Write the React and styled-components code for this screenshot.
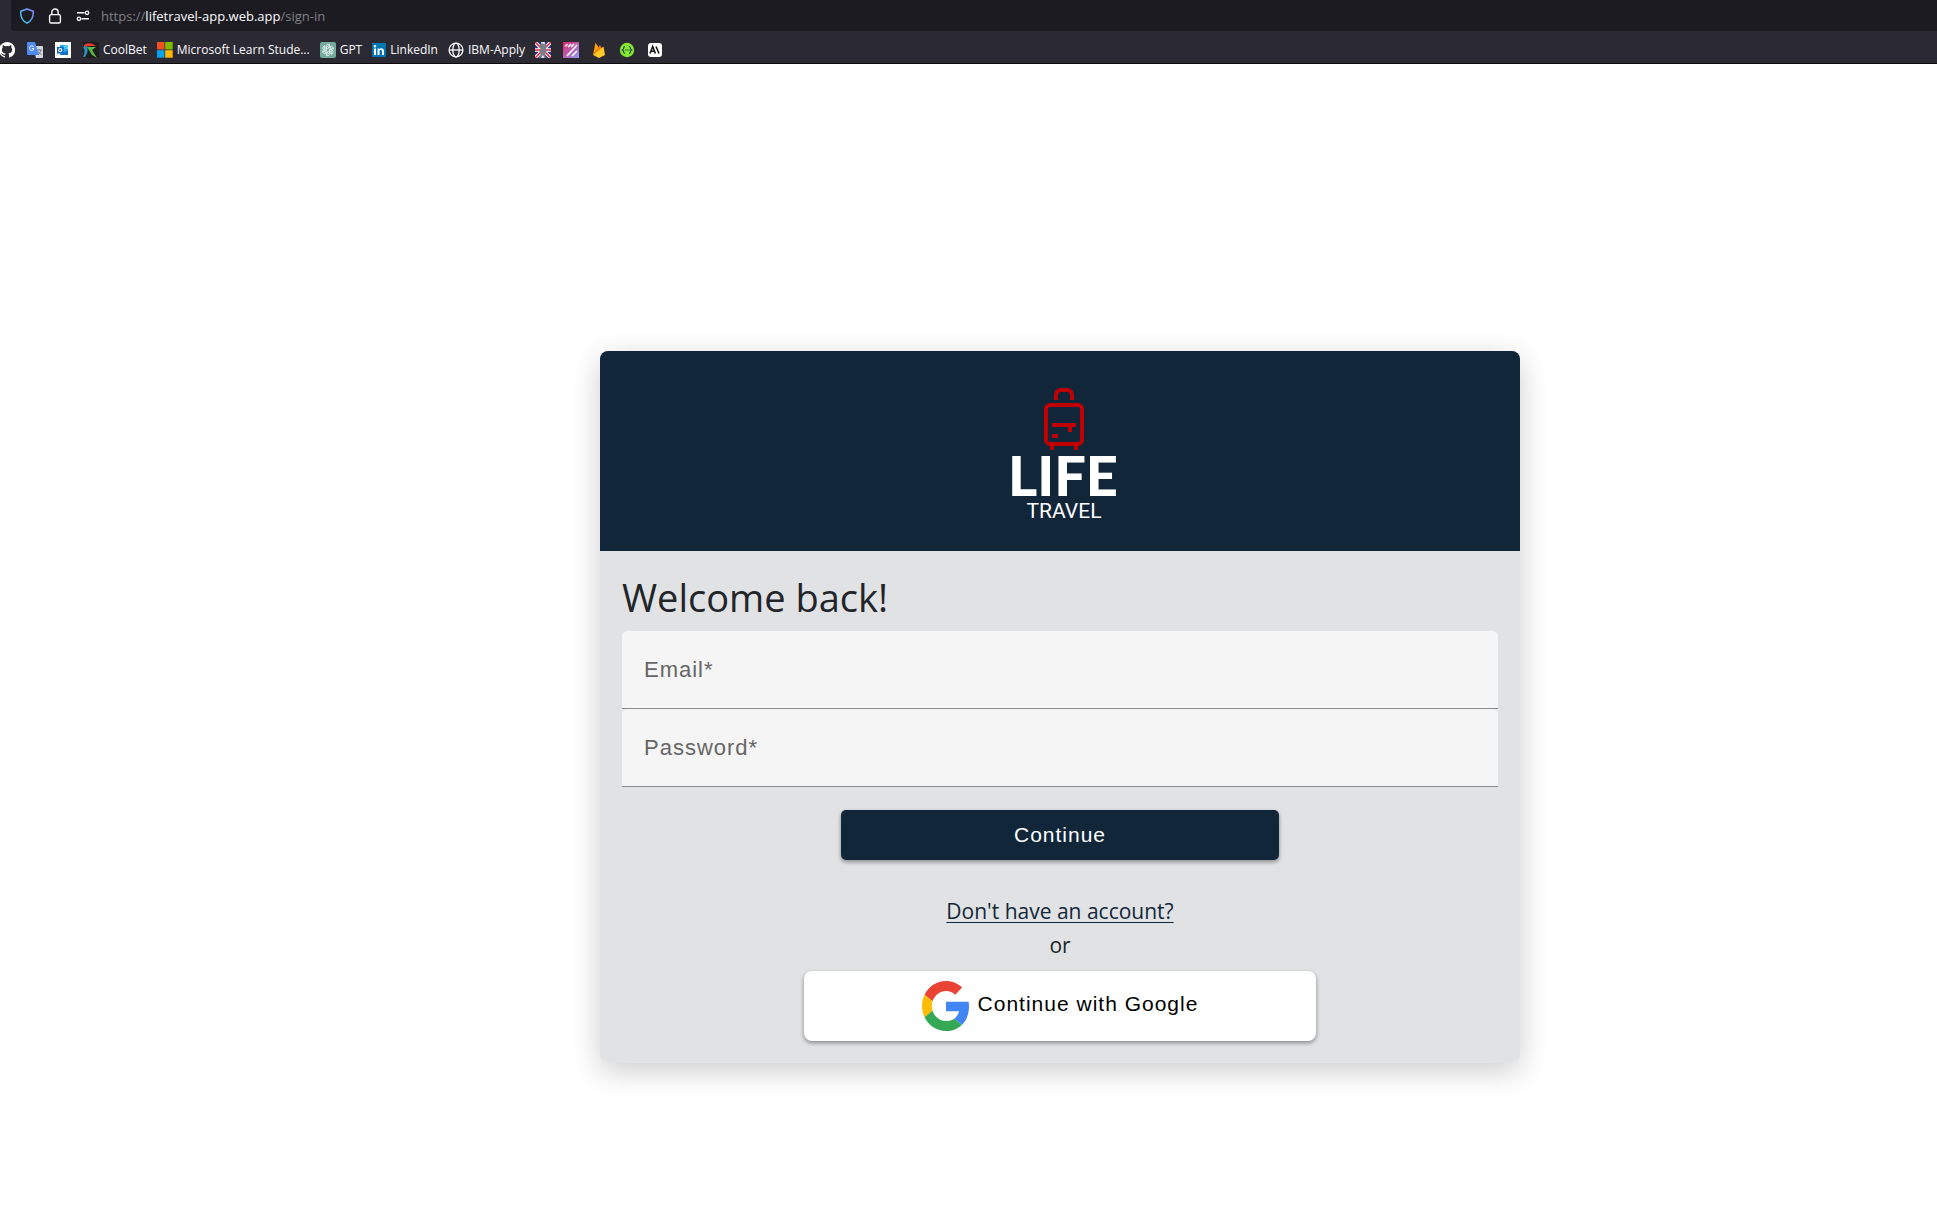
import React from "react";
import styled, { createGlobalStyle } from "styled-components";

const ui = '"Open Sans", "Noto Sans", sans-serif';
const arial = '"Liberation Sans", Arial, sans-serif';
const navy = "#12263a";

const Global = createGlobalStyle`
  *, *::before, *::after { box-sizing: border-box; }
  body { margin: 0; background: #fff; font-family: ${ui}; }
`;

const Page = styled.div`
  min-height: 100vh;
  display: flex;
  flex-direction: column;
`;

const Chrome = styled.header`
  background: #2b2a33;
  border-bottom: 1px solid #0c0c0d;
  height: 64px;
  color: #fbfbfe;
`;

const AddressBar = styled.div`
  height: 31px;
  margin-left: 11px;
  padding-left: 8px;
  background: #1c1b22;
  border-bottom-left-radius: 4px;
  display: flex;
  align-items: center;
  gap: 10px;
`;

const SiteStatus = styled.div`
  display: flex;
  align-items: center;
  gap: 12px;
`;

const Address = styled.span`
  font-size: 13px;
  line-height: 20px;
  color: #808085;
  white-space: nowrap;
  b { font-weight: 400; color: #fbfbfe; }
`;

const Bookmarks = styled.nav`
  height: 32px;
  padding-top: 5px;
  display: flex;
  align-items: center;
  margin-left: -1px;
`;

const Bookmark = styled.a`
  display: flex;
  align-items: center;
  gap: 4px;
  margin-right: ${(p) => (p.$labelled ? "10px" : "12px")};
  font-size: 12px;
  line-height: 16px;
  color: #fbfbfe;
  text-decoration: none;
  white-space: nowrap;
  svg { flex: none; }
`;

const Main = styled.main`
  flex: 1;
  padding: 287px 0 80px 183px;
  display: flex;
  justify-content: center;
  align-items: flex-start;
`;

const Card = styled.section`
  width: 100%;
  max-width: 920px;
  border-radius: 8px;
  overflow: hidden;
  background: #e1e2e4;
  box-shadow: 0 8px 30px rgba(0, 0, 0, 0.2);
`;

const Banner = styled.div`
  height: 200px;
  background: ${navy};
  display: flex;
  justify-content: center;
`;

const Form = styled.form`
  padding: 22px;
  display: flex;
  flex-direction: column;
  align-items: center;
`;

const Title = styled.h1`
  align-self: stretch;
  margin: 0 0 10px;
  font-size: 38px;
  line-height: 48px;
  font-weight: 400;
  color: #212529;
`;

const Field = styled.input`
  width: 100%;
  height: 78px;
  padding: 0 22px;
  border: 0;
  border-bottom: 1px solid #8c8c8c;
  border-radius: 5px 5px 0 0;
  background: #f5f5f5;
  font-family: ${arial};
  font-size: 22px;
  letter-spacing: 1px;
  color: #222;
  &::placeholder { color: #666; opacity: 1; }
`;

const Button = styled.button`
  width: ${(p) => p.$width};
  max-width: 100%;
  height: ${(p) => p.$height};
  margin: ${(p) => p.$margin || "0"};
  border: 0;
  border-radius: ${(p) => p.$radius};
  background: ${(p) => p.$background};
  color: ${(p) => p.$color};
  box-shadow: 0 2px 4px rgba(0, 0, 0, 0.4);
  display: flex;
  align-items: center;
  justify-content: center;
  gap: 8px;
  font-family: ${arial};
  font-size: 21px;
  letter-spacing: 1px;
`;

const GoogleLabel = styled.span`
  padding-bottom: 4px;
`;

const SignUp = styled.a`
  font-size: 21px;
  line-height: 34px;
  color: ${navy};
  text-decoration-thickness: 1px;
  text-underline-offset: 3px;
`;

const Or = styled.span`
  font-size: 21px;
  line-height: 34px;
  color: #212529;
  margin-bottom: 9px;
`;

const Icon = ({ children, size = 16, box = 16 }) => (
  <svg width={size} height={size} viewBox={`0 0 ${box} ${box}`} fill="none" aria-hidden="true">
    {children}
  </svg>
);

const Shield = () => (
  <Icon>
    <defs>
      <linearGradient id="shield" x1="0" y1="1" x2="1" y2="0">
        <stop offset="0" stopColor="#2fd8e8" />
        <stop offset="1" stopColor="#8a86ff" />
      </linearGradient>
    </defs>
    <path d="M8 1 L14.3 3.2 C14.6 9 12.5 13 8 15.2 C3.5 13 1.4 9 1.7 3.2 Z" stroke="url(#shield)" strokeWidth="1.5" strokeLinejoin="round" />
  </Icon>
);
const Lock = () => (
  <Icon>
    <rect x="2.6" y="6.6" width="10.8" height="8.4" rx="1.6" stroke="#fbfbfe" strokeWidth="1.4" />
    <path d="M4.8 6.5V4.2a3.2 3.2 0 0 1 6.4 0v2.3" stroke="#fbfbfe" strokeWidth="1.4" />
  </Icon>
);
const Sliders = () => (
  <Icon>
    <path d="M2 4.800h7.500M6.500 10.800H14" stroke="#fbfbfe" strokeWidth="1.400" />
    <circle cx="12" cy="4.800" r="1.700" stroke="#fbfbfe" strokeWidth="1.300" />
    <circle cx="4" cy="10.800" r="1.700" stroke="#fbfbfe" strokeWidth="1.300" />
  </Icon>
);
const GitHub = () => (
  <Icon>
    <path fill="#fff" d="M8 0a8 8 0 0 0-2.53 15.59c.4.07.55-.17.55-.38v-1.34c-2.23.48-2.7-1.07-2.7-1.07-.36-.92-.89-1.17-.89-1.17-.73-.5.05-.49.05-.49.8.06 1.23.83 1.23.83.72 1.22 1.88.87 2.33.66.07-.52.28-.87.51-1.07-1.78-.2-3.64-.89-3.64-3.95 0-.87.31-1.59.82-2.15-.08-.2-.36-1.02.08-2.12 0 0 .67-.21 2.2.82a7.6 7.6 0 0 1 4 0c1.53-1.04 2.2-.82 2.2-.82.44 1.1.16 1.92.08 2.12.51.56.82 1.27.82 2.15 0 3.07-1.87 3.75-3.65 3.95.29.25.54.73.54 1.48v2.2c0 .21.15.46.55.38A8 8 0 0 0 8 0Z" />
  </Icon>
);
const Translate = () => (
  <Icon>
    <path d="M6 4h9a1 1 0 0 1 1 1v10a1 1 0 0 1-1 1H9Z" fill="#d5d8dd" />
    <path d="M1 0h7l4 13H1a1 1 0 0 1-1-1V1a1 1 0 0 1 1-1Z" fill="#4c8bf5" />
    <path d="M6.8 5A2.3 2.3 0 1 0 7 6.7H4.9" stroke="#fff" strokeWidth="1" />
    <path d="M10 8h5M12.500 7v1M14 8c-.5 2-2 4-3 4.500M11 9.500c1 1.500 2 2.500 3.500 3" stroke="#6b7480" strokeWidth=".9" />
  </Icon>
);
const Outlook = () => (
  <Icon>
    <path d="M0 0h16v16H0Z" fill="#fff" />
    <path d="M5 3h8v10H5Z" fill="#28a8ea" />
    <path d="M9 3h4v4H9Z" fill="#50c9ff" />
    <path d="m5 13 8-5v5H5Z" fill="#1470c8" />
    <path d="M2 5h6.500v6.500H2Z" fill="#0a64b8" />
    <circle cx="5.200" cy="8.200" r="1.600" stroke="#fff" strokeWidth="1.100" />
  </Icon>
);
const CoolBet = () => (
  <Icon>
    <path d="M0 0h16v16H0Z" fill="#1d1d1b" />
    <path d="M1 3C4 0 10 1 13 4L8 4 1 5Z" fill="#e8392c" />
    <path d="M0 5l4-1c1 4 1 7-2 11L0 15c2-4 2-7 0-10Z" fill="#2c8fc0" />
    <path d="M4 5h9L9 8l5 8-5-3-3-5Z" fill="#55b848" />
  </Icon>
);
const Microsoft = () => (
  <Icon>
    <path d="M0 0h7.500v7.500H0Z" fill="#f25022" />
    <path d="M8.200 0h7.500v7.500H8.200Z" fill="#7fba00" />
    <path d="M0 8.200h7.500v7.500H0Z" fill="#00a4ef" />
    <path d="M8.200 8.200h7.500v7.500H8.200Z" fill="#ffb900" />
  </Icon>
);
const Gpt = () => (
  <Icon>
    <rect width="16" height="16" rx="2" fill="#74aa9c" />
    {[0, 60, 120, 180, 240, 300].map((a) => (
      <path key={a} transform={`rotate(${a} 8 8)`} d="M6 6.800V4.400a2.300 2.300 0 0 1 4-1.300L6.500 5.200V8" stroke="#fff" strokeWidth=".7" />
    ))}
  </Icon>
);
const LinkedIn = () => (
  <Icon size={14} box={14}>
    <path d="M0 0h14v14H0Z" fill="#0077b5" />
    <path d="M2 5.400h2V12H2ZM5.500 5.400h1.900v.9c1-1.600 4.600-1.500 4.600 1.700v4h-2V8.500c0-2-2.500-1.900-2.500 0V12h-2Z" fill="#fff" />
    <circle cx="3" cy="3.200" r="1.200" fill="#fff" />
  </Icon>
);
const Globe = () => (
  <Icon>
    <g stroke="#fbfbfe" strokeWidth="1.300">
      <circle cx="8" cy="8" r="6.900" />
      <ellipse cx="8" cy="8" rx="3.200" ry="6.900" />
      <path d="M1 8h14" />
    </g>
  </Icon>
);
const Flag = () => (
  <Icon>
    <path d="M0 0h16v16H0Z" fill="#28348a" />
    <path d="m0 0 16 16M16 0 0 16M8 0v16M0 8h16" stroke="#fff" strokeWidth="3.500" />
    <path d="m0 0 16 16M16 0 0 16M0 8h16" stroke="#e0223a" strokeWidth="1.500" />
    <path d="m4 4 3-3 2 1 3 1-1 3 1 3-2 2 1 5H9l-1-3-2 3H4l2-5-2-2 2-2Z" fill="#77808a" />
  </Icon>
);
const Stripes = () => (
  <Icon>
    <defs>
      <linearGradient id="stripes" x1="0" y1="0" x2="1" y2="1">
        <stop offset="0" stopColor="#e5206a" />
        <stop offset="1" stopColor="#8fa0f5" />
      </linearGradient>
    </defs>
    <path d="M0 0h16v16H0Z" fill="url(#stripes)" />
    <path d="m2 4.500 2.500-2.500M5 5l3-3M8 5l3-3M4 14 14 3M9 14l5-5" stroke="#fff" strokeWidth="1.500" />
  </Icon>
);
const Firebase = () => (
  <Icon>
    <path d="M2 13 4.500.800 8 6Z" fill="#ffa000" />
    <path d="M2 13 9 3l2 4Z" fill="#f57c00" />
    <path d="m2 13 10.500-8.500L14 13l-6 3Z" fill="#ffca28" />
  </Icon>
);
const Swagger = () => (
  <Icon>
    <circle cx="8" cy="8" r="7.200" fill="#85ea2d" />
    <path d="M6 4.500c-2 0-1 3-2.500 3.500C5 8.500 4 11.500 6 11.500M10 4.500c2 0 1 3 2.500 3.500-1.500.5-.5 3.500-2.500 3.500" stroke="#173647" strokeWidth="1.100" />
    <path d="M6 8h4.500" stroke="#173647" strokeWidth="1.200" strokeDasharray="1.100 .6" />
  </Icon>
);
const Anthropic = () => (
  <Icon>
    <rect x="1" y="1" width="14" height="14" rx="3" fill="#fff" />
    <path d="m3 11.500 2.700-7 2.700 7M4 9.300h3.500M9 4.500l3 7" stroke="#181818" strokeWidth="1.600" />
  </Icon>
);

const Logo = () => (
  <svg width="200" height="200" viewBox="0 0 200 200" role="img" aria-label="Life Travel">
    <g fill="none" stroke="#c00000" strokeWidth="4">
      <path d="M96 49v-5a5 5 0 0 1 5-5h6a5 5 0 0 1 5 5v5" />
      <rect x="86" y="54" width="36" height="39" rx="4" />
      <path d="M92 74h24M110 74v7M92 85h6M92 95v4M116 95v4" />
    </g>
    <text x="103" y="145" textAnchor="middle" fill="#fff" fontFamily="Lato, sans-serif" fontWeight="900" fontSize="56">LIFE</text>
    <text x="104" y="167" textAnchor="middle" fill="#fff" fontFamily="Roboto, sans-serif" fontSize="21">TRAVEL</text>
  </svg>
);

const GoogleG = () => (
  <svg width="48" height="50" viewBox="0 0 48 48" preserveAspectRatio="none" aria-hidden="true">
    <path fill="#EA4335" d="M24 9.500c3.540 0 6.710 1.220 9.210 3.600l6.850-6.850C35.900 2.380 30.470 0 24 0 14.620 0 6.510 5.380 2.560 13.220l7.980 6.190C12.430 13.720 17.740 9.500 24 9.500z" />
    <path fill="#4285F4" d="M46.980 24.550c0-1.570-.15-3.090-.38-4.550H24v9.020h12.940c-.58 2.960-2.260 5.480-4.780 7.180l7.730 6c4.510-4.180 7.090-10.360 7.090-17.650z" />
    <path fill="#FBBC05" d="M10.530 28.590c-.48-1.450-.76-2.990-.76-4.590s.27-3.140.76-4.590l-7.980-6.190C.92 16.460 0 20.120 0 24c0 3.880.92 7.540 2.560 10.780l7.970-6.190z" />
    <path fill="#34A853" d="M24 48c6.480 0 11.930-2.130 15.890-5.810l-7.730-6c-2.150 1.450-4.920 2.300-8.160 2.300-6.260 0-11.570-4.220-13.470-9.910l-7.980 6.190C6.510 42.620 14.620 48 24 48z" />
  </svg>
);

const bookmarks = [
  [GitHub, "", "GitHub"],
  [Translate, "", "Translate"],
  [Outlook, "", "Outlook"],
  [CoolBet, "CoolBet"],
  [Microsoft, "Microsoft Learn Stude..."],
  [Gpt, "GPT"],
  [LinkedIn, "LinkedIn"],
  [Globe, "IBM-Apply"],
  [Flag, "", "English"],
  [Stripes, "", "Stripes"],
  [Firebase, "", "Firebase"],
  [Swagger, "", "Swagger"],
  [Anthropic, "", "Anthropic"],
];

export default function App() {
  return (
    <Page>
      <Global />
      <Chrome>
        <AddressBar>
          <SiteStatus>
            <Shield />
            <Lock />
            <Sliders />
          </SiteStatus>
          <Address>
            https://<b>lifetravel-app.web.app</b>/sign-in
          </Address>
        </AddressBar>
        <Bookmarks>
          {bookmarks.map(([Glyph, text, hint]) => (
            <Bookmark key={text || hint} href="#" aria-label={text || hint} $labelled={Boolean(text)}>
              <Glyph />
              {text}
            </Bookmark>
          ))}
        </Bookmarks>
      </Chrome>
      <Main>
        <Card>
          <Banner>
            <Logo />
          </Banner>
          <Form onSubmit={(e) => e.preventDefault()}>
            <Title>Welcome back!</Title>
            <Field type="email" aria-label="Email" placeholder="Email*" />
            <Field type="password" aria-label="Password" placeholder="Password*" />
            <Button type="submit" $width="50%" $height="50px" $radius="5px" $background={navy} $color="#fff" $margin="23px 0 34px">
              Continue
            </Button>
            <SignUp href="#">Don't have an account?</SignUp>
            <Or>or</Or>
            <Button type="button" $width="512px" $height="70px" $radius="8px" $background="#fff" $color="#000">
              <GoogleG />
              <GoogleLabel>Continue with Google</GoogleLabel>
            </Button>
          </Form>
        </Card>
      </Main>
    </Page>
  );
}
